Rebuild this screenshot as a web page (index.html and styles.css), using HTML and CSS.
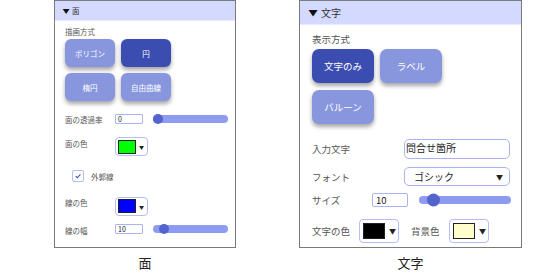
FILE: index.html
```html
<!DOCTYPE html>
<html lang="ja">
<head>
<meta charset="utf-8">
<link rel="stylesheet" href="styles.css">
</head>
<body>
<div class="stage">
  <figure class="fig fig-s">
    <div class="pane pane-s">
      <div class="head"><span class="tri">&#9660;</span><span>面</span></div>
      <div class="body">
        <div class="title">描画方式</div>
        <div class="btns">
          <div class="btn">ポリゴン</div>
          <div class="btn on">円</div>
          <div class="btn">楕円</div>
          <div class="btn">自由曲線</div>
        </div>
        <div class="row r-alpha">
          <span class="lbl">面の透過率</span>
          <span class="inp">0</span>
          <span class="slider"><span class="thumb" style="left:0px"></span></span>
        </div>
        <div class="row r-fill">
          <span class="lbl">面の色</span>
          <span class="cpick"><span class="sw" style="background:#00ff00"></span><span class="arr">&#9660;</span></span>
        </div>
        <div class="row r-chk">
          <span class="chk"><svg viewBox="0 0 10 10" width="8" height="8"><path d="M2 5.2 L4.2 7.2 L8 3" fill="none" stroke="#3f51b5" stroke-width="1.4"/></svg></span>
          <span class="clbl">外郭線</span>
        </div>
        <div class="row r-line">
          <span class="lbl">線の色</span>
          <span class="cpick"><span class="sw" style="background:#0000ff"></span><span class="arr">&#9660;</span></span>
        </div>
        <div class="row r-width">
          <span class="lbl">線の幅</span>
          <span class="inp">10</span>
          <span class="slider"><span class="thumb" style="left:6px"></span></span>
        </div>
      </div>
    </div>
    <figcaption class="cap">面</figcaption>
  </figure>

  <figure class="fig fig-l">
    <div class="pane pane-l">
      <div class="head"><span class="tri">&#9660;</span><span>文字</span></div>
      <div class="body">
        <div class="title">表示方式</div>
        <div class="btns">
          <div class="btn on">文字のみ</div>
          <div class="btn">ラベル</div>
          <div class="btn">バルーン</div>
        </div>
        <div class="row r-text">
          <span class="lbl">入力文字</span>
          <span class="inp wide">問合せ箇所</span>
        </div>
        <div class="row r-font">
          <span class="lbl">フォント</span>
          <span class="sel"><span>ゴシック</span><span class="arr">&#9660;</span></span>
        </div>
        <div class="row r-size">
          <span class="lbl">サイズ</span>
          <span class="inp">10</span>
          <span class="slider"><span class="thumb" style="left:8px"></span></span>
        </div>
        <div class="row r-col">
          <span class="lbl">文字の色</span>
          <span class="cpick"><span class="sw" style="background:#000000"></span><span class="arr">&#9660;</span></span>
          <span class="lbl2">背景色</span>
          <span class="cpick"><span class="sw" style="background:#ffffcc"></span><span class="arr">&#9660;</span></span>
        </div>
      </div>
    </div>
    <figcaption class="cap">文字</figcaption>
  </figure>
</div>
</body>
</html>
```

FILE: styles.css
```css
* { box-sizing: border-box; }
html, body { margin: 0; padding: 0; background: #ffffff; }
body { font-family: "Noto Sans CJK JP", "Noto Sans", sans-serif; color: #555; }

.stage { display: flex; align-items: flex-start; padding-left: 54px; gap: 63px; }
.fig { margin: 0; display: flex; flex-direction: column; align-items: center; }

.pane { border: 1px solid #7a7a7a; background: #fff; height: 248px; }
.pane-s { width: 182px; }
.pane-l { width: 223px; }

.head { display: flex; align-items: center; background: #d4daff; border-bottom: 1px solid #e6eaff; color: #333; }
.pane-s .head { height: 20px; padding-left: 8px; font-size: 7.5px; gap: 3px; }
.pane-l .head { height: 24px; padding-left: 9px; font-size: 10px; gap: 4px; }
.tri { font-size: 0.8em; transform: scaleX(1.2); color: #111; }
.pane-l .tri { font-size: 8px; }

.body { display: flex; flex-direction: column; }
.pane-s .body { padding-left: 10px; font-size: 7.5px; }
.pane-l .body { padding-left: 12px; font-size: 9.5px; }

.title { line-height: 10px; }
.pane-s .title { margin-top: 6px; }
.pane-l .title { margin-top: 8px; line-height: 12px; }

.btns { display: grid; }
.pane-s .btns { grid-template-columns: 50px 50px; grid-auto-rows: 28px; gap: 6px; margin-top: 2px; }
.pane-l .btns { grid-template-columns: 62px 62px; grid-auto-rows: 34px; column-gap: 6px; row-gap: 7px; margin-top: 4px; }

.btn { display: flex; align-items: center; justify-content: center; background: #8896dd; color: #fff; border-radius: 6px; box-shadow: 0 3px 4px rgba(0, 0, 0, 0.35); }
.pane-l .btn { border-radius: 7px; }
.btn.on { background: #3c4db1; }

.row { display: flex; align-items: center; }
.lbl { flex: none; }
.pane-s .lbl { width: 50px; }

.inp { display: flex; align-items: center; border: 1px solid #aab4f2; border-radius: 2px; background: #fff; color: #222; padding-left: 2px; }
.pane-s .inp { width: 28px; height: 10px; font-size: 7px; border-radius: 1px; }

.slider { position: relative; background: #8d9cf0; border-radius: 5px; }
.pane-s .slider { width: 75px; height: 8px; margin-left: 10px; }
.pane-l .slider { width: 92px; height: 8px; margin-left: 11px; }
.thumb { position: absolute; top: 50%; transform: translateY(-50%); border-radius: 50%; background: #5364cc; }
.pane-s .thumb { width: 10px; height: 10px; }
.pane-l .thumb { width: 13px; height: 13px; }

.cpick { display: flex; align-items: center; border: 1px solid #b4bdf4; border-radius: 4px; background: #fff; }
.sw { border: 1px solid #222; display: block; }
.arr { color: #222; }
.pane-s .cpick { width: 33px; height: 19px; padding-left: 2px; gap: 3px; }
.pane-s .sw { width: 18px; height: 14px; }
.pane-s .arr { font-size: 5px; }
.pane-l .cpick { width: 40px; height: 24px; padding-left: 3px; gap: 4px; }
.pane-l .sw { width: 22px; height: 16px; }
.pane-l .arr { font-size: 7px; }

.r-alpha { margin-top: 13px; height: 10px; }
.r-fill { margin-top: 13px; height: 19px; }
.r-fill .lbl, .r-line .lbl { align-self: flex-start; margin-top: 1px; }
.r-chk { margin-top: 14px; height: 12px; padding-left: 7px; }
.chk { display: flex; align-items: center; justify-content: center; width: 12px; height: 12px; border: 1px solid #b4bdf4; border-radius: 2px; }
.clbl { margin-left: 7px; }
.r-line { margin-top: 14px; height: 20px; }
.r-width { margin-top: 7px; height: 11px; }
.r-width .lbl { margin-top: 4px; }

.pane-l .r-text { margin-top: 15px; height: 20px; }
.pane-l .r-text .lbl, .pane-l .r-font .lbl { width: 92px; }
.inp.wide { width: 106px; height: 20px; border-radius: 5px; font-size: 10px; padding-left: 1px; align-items: flex-start; }
.pane-l .r-font { margin-top: 8px; height: 19px; }
.sel { display: flex; align-items: center; justify-content: space-between; width: 106px; height: 19px; border: 1px solid #aab4f2; border-radius: 5px; padding: 0 6px 0 9px; font-size: 10px; color: #222; }
.sel .arr { font-size: 7px; }
.pane-l .r-size { margin-top: 7px; height: 14px; }
.pane-l .r-size .lbl { width: 60px; }
.pane-l .r-size .inp { width: 36px; height: 14px; font-size: 9.5px; padding-left: 3px; }
.pane-l .r-col { margin-top: 12px; height: 24px; }
.pane-l .r-col .lbl { width: 47px; }
.lbl2 { margin-left: 12px; width: 38px; }

.cap { margin-top: 7px; font-size: 13px; line-height: 16px; color: #222; }
```
